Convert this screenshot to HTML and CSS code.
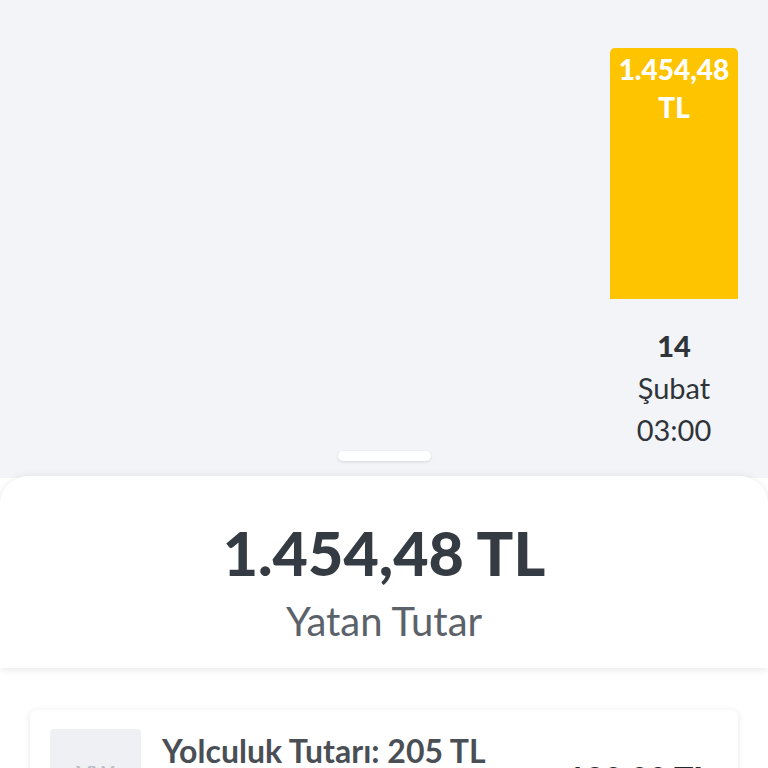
FILE: index.html
```html
<!DOCTYPE html>
<html lang="tr">
  <head>
    <meta charset="UTF-8" />
    <meta name="viewport" content="width=device-width, initial-scale=1.0" />
    <title>Kazanç Detayı</title>
    <link rel="stylesheet" href="styles.css">
  </head>
  <body>
    <!-- daily earnings chart -->
    <div class="chart">
      <div class="bars">
        <div class="bar-col">
          <div class="bar">1.454,48 TL</div>
          <div class="bar-date">
            <span class="day">14</span>
            <span>Şubat</span>
            <span>03:00</span>
          </div>
        </div>
      </div>
      <div class="handle"></div>
    </div>

    <div class="sheet">
      <div class="total">1.454,48 TL</div>
      <div class="total-label">Yatan Tutar</div>
    </div>

    <div class="list">
      <div class="trip-card">
        <div class="trip-thumb">VW</div>
        <div class="trip-info">
          <div class="trip-title">Yolculuk Tutarı: 205 TL</div>
        </div>
        <div class="trip-amount">180,00 TL</div>
      </div>
    </div>
  </body>
</html>
```

FILE: styles.css
```css
body {
  margin: 0;
  font-family: Lato, "Noto Sans", sans-serif;
  background-color: #ffffff;
  color: #2f343a;
  height: 768px;
  overflow: hidden;
}
.chart {
  background-color: #f2f4f8;
  height: 478px;
  display: flex;
  flex-direction: column;
}
.bars {
  display: flex;
  justify-content: flex-end;
  padding: 48px 30px 0 0;
}
.bar-col {
  width: 128px;
  display: flex;
  flex-direction: column;
  align-items: center;
}
.bar {
  width: 100%;
  height: 251px;
  background-color: #ffc400;
  border-radius: 5px 5px 0 0;
  color: #ffffff;
  font-weight: 900;
  font-size: 28px;
  line-height: 38px;
  text-align: center;
  padding-top: 2px;
  box-sizing: border-box;
}
.bar-date {
  margin-top: 26px;
  display: flex;
  flex-direction: column;
  align-items: center;
  font-size: 29px;
  line-height: 42px;
  color: #2f343a;
}
.day {
  font-weight: 900;
  font-size: 29px;
}
.handle {
  width: 93px;
  height: 10px;
  margin: 0 auto;
  margin-top: 0;
  background-color: #ffffff;
  border-radius: 5px;
  box-shadow: 0 1px 3px rgba(0, 0, 0, 0.12);
}
.sheet {
  background-color: #ffffff;
  border-radius: 28px 28px 0 0;
  margin-top: -2px;
  height: 192px;
  box-sizing: border-box;
  padding-top: 42px;
  text-align: center;
  box-shadow: 0 -2px 6px rgba(0, 0, 0, 0.04), 0 3px 6px rgba(0, 0, 0, 0.07);
  position: relative;
}
.total {
  font-size: 61px;
  font-weight: 900;
  line-height: 70px;
  color: #353b42;
}
.total-label {
  margin-top: 7px;
  font-size: 40px;
  line-height: 52px;
  color: #5b626a;
}
.list {
  padding: 42px 30px 0;
}
.trip-card {
  display: flex;
  align-items: flex-start;
  background-color: #ffffff;
  border-radius: 6px;
  box-shadow: 0 1px 6px rgba(0, 0, 0, 0.1);
  padding: 19px 28px 20px 20px;
  height: 200px;
}
.trip-thumb {
  width: 91px;
  height: 91px;
  border-radius: 4px;
  background-color: #eef0f3;
  color: #b9bec5;
  font-size: 22px;
  font-weight: 700;
  text-align: center;
  line-height: 91px;
  flex-shrink: 0;
}
.trip-info {
  flex: 1;
  padding-left: 21px;
}
.trip-title {
  font-size: 32px;
  font-weight: 700;
  line-height: 44px;
  color: #4a4f56;
}
.trip-amount {
  margin-top: 30px;
  font-size: 32px;
  font-weight: 900;
  color: #25292e;
}
```
